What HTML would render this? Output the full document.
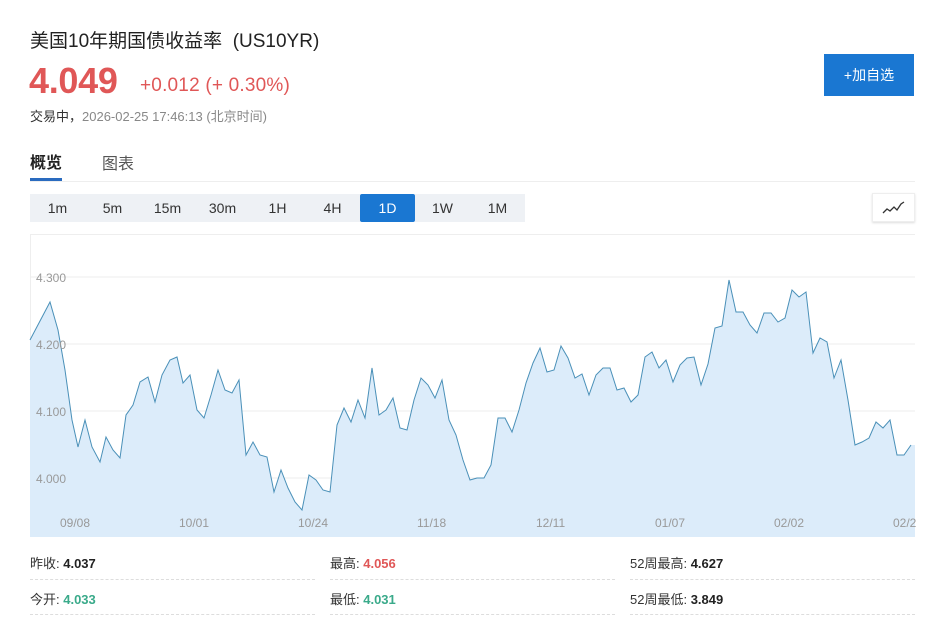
<!DOCTYPE html>
<html><head><meta charset="utf-8"><style>
body{margin:0;width:939px;height:630px;background:#fff;font-family:"Liberation Sans","Noto Sans CJK SC",sans-serif;position:relative;overflow:hidden}
.a{position:absolute;white-space:nowrap}
.tf{position:absolute;top:194px;height:28px;line-height:28px;text-align:center;font-size:14px;color:#333;background:#eef1f5}
.lbl{font-size:13px;color:#333}
.lbl b{color:#222}
.dash{position:absolute;height:0;border-top:1px dashed #ddd}
</style></head><body>
<div class="a" style="left:30px;top:26px;font-size:19px;color:#222">美国10年期国债收益率&nbsp;&nbsp;(US10YR)</div>
<div class="a" style="left:29px;top:60px;font-size:36px;font-weight:bold;color:#e05757;letter-spacing:-0.3px">4.049</div>
<div class="a" style="left:140px;top:75px;font-size:19px;color:#e05757;letter-spacing:0.2px">+0.012 (+ 0.30%)</div>
<div class="a" style="left:30px;top:106px;font-size:13px;color:#333">交易中，<span style="color:#888">2026-02-25 17:46:13 (北京时间)</span></div>
<div class="a" style="left:824px;top:54px;width:90px;height:42px;background:#1a77d2;color:#fff;font-size:14px;line-height:42px;text-align:center">+加自选</div>
<div class="a" style="left:30px;top:149px;font-size:16px;font-weight:bold;color:#222">概览</div>
<div class="a" style="left:102px;top:150px;font-size:16px;color:#555">图表</div>
<div class="a" style="left:30px;top:178px;width:32px;height:3px;background:#2a6bbf"></div>
<div class="a" style="left:30px;top:181px;width:885px;height:1px;background:#eee"></div>
<div class="tf" style="left:30px;width:55px">1m</div>
<div class="tf" style="left:85px;width:55px">5m</div>
<div class="tf" style="left:140px;width:55px">15m</div>
<div class="tf" style="left:195px;width:55px">30m</div>
<div class="tf" style="left:250px;width:55px">1H</div>
<div class="tf" style="left:305px;width:55px">4H</div>
<div class="tf" style="left:360px;width:55px;background:#1a77d2;color:#fff;border-radius:2px">1D</div>
<div class="tf" style="left:415px;width:55px">1W</div>
<div class="tf" style="left:470px;width:55px">1M</div>
<div class="a" style="left:872px;top:193px;width:41px;height:27px;border:1px solid #eee;box-shadow:0 1px 2px #ddd">
<svg width="41" height="27"><path d="M10 19 L14 15 L17 17 L21 13 L24 16 L28 10 L31 8" fill="none" stroke="#333" stroke-width="1.3"/></svg></div>
<div class="a" style="left:30px;top:234px;width:885px;height:1px;background:#eee"></div>
<svg class="a" style="left:0;top:0" width="939" height="630">
<g stroke="#ececec" stroke-width="1"><line x1="30" y1="277" x2="915" y2="277"/><line x1="30" y1="344" x2="915" y2="344"/><line x1="30" y1="411" x2="915" y2="411"/><line x1="30" y1="478" x2="915" y2="478"/></g>
<line x1="30.5" y1="235" x2="30.5" y2="537" stroke="#eee"/>
<path d="M30 340 L50 302 L58 330 L65 370 L72 420 L78 447 L85 420 L92 447 L100 462 L106 437 L113 450 L120 458 L126 415 L133 405 L140 382 L148 377 L155 402 L162 375 L170 360 L177 357 L183 383 L190 375 L197 410 L204 418 L211 395 L218 370 L225 390 L232 393 L239 380 L246 455 L253 442 L260 455 L267 457 L274 492 L281 470 L288 488 L295 502 L302 510 L309 475 L316 480 L323 490 L330 492 L337 425 L344 408 L351 422 L358 400 L365 418 L372 368 L379 415 L386 410 L393 398 L400 428 L407 430 L414 400 L421 378 L428 385 L435 398 L442 380 L449 420 L456 435 L463 460 L470 480 L477 478 L484 478 L491 465 L498 418 L505 418 L512 432 L519 410 L526 383 L533 363 L540 348 L547 372 L554 370 L561 346 L568 358 L575 378 L582 374 L589 395 L596 375 L603 368 L610 368 L617 390 L624 388 L631 402 L638 395 L645 357 L652 352 L659 368 L666 360 L673 382 L680 365 L687 358 L694 357 L701 385 L708 364 L715 328 L722 326 L729 280 L736 312 L743 312 L750 325 L757 333 L764 313 L771 313 L778 322 L785 318 L792 290 L799 297 L806 292 L813 353 L820 338 L827 342 L834 378 L841 360 L848 400 L855 445 L862 442 L869 438 L876 422 L883 428 L890 420 L897 455 L904 455 L911 445 L915 445 L915 537 L30 537 Z" fill="#dcecfa"/>
<path d="M30 340 L50 302 L58 330 L65 370 L72 420 L78 447 L85 420 L92 447 L100 462 L106 437 L113 450 L120 458 L126 415 L133 405 L140 382 L148 377 L155 402 L162 375 L170 360 L177 357 L183 383 L190 375 L197 410 L204 418 L211 395 L218 370 L225 390 L232 393 L239 380 L246 455 L253 442 L260 455 L267 457 L274 492 L281 470 L288 488 L295 502 L302 510 L309 475 L316 480 L323 490 L330 492 L337 425 L344 408 L351 422 L358 400 L365 418 L372 368 L379 415 L386 410 L393 398 L400 428 L407 430 L414 400 L421 378 L428 385 L435 398 L442 380 L449 420 L456 435 L463 460 L470 480 L477 478 L484 478 L491 465 L498 418 L505 418 L512 432 L519 410 L526 383 L533 363 L540 348 L547 372 L554 370 L561 346 L568 358 L575 378 L582 374 L589 395 L596 375 L603 368 L610 368 L617 390 L624 388 L631 402 L638 395 L645 357 L652 352 L659 368 L666 360 L673 382 L680 365 L687 358 L694 357 L701 385 L708 364 L715 328 L722 326 L729 280 L736 312 L743 312 L750 325 L757 333 L764 313 L771 313 L778 322 L785 318 L792 290 L799 297 L806 292 L813 353 L820 338 L827 342 L834 378 L841 360 L848 400 L855 445 L862 442 L869 438 L876 422 L883 428 L890 420 L897 455 L904 455 L911 445" fill="none" stroke="#4a90b8" stroke-width="1"/>
<g font-family="Liberation Sans,sans-serif" font-size="12" fill="#999"><text x="36" y="282">4.300</text><text x="36" y="349">4.200</text><text x="36" y="416">4.100</text><text x="36" y="483">4.000</text>
<text x="60" y="527">09/08</text><text x="179" y="527">10/01</text><text x="298" y="527">10/24</text><text x="417" y="527">11/18</text><text x="536" y="527">12/11</text><text x="655" y="527">01/07</text><text x="774" y="527">02/02</text><text x="893" y="527">02/2</text></g>
</svg>
<div class="a lbl" style="left:30px;top:553px">昨收: <b>4.037</b></div>
<div class="a lbl" style="left:330px;top:553px">最高: <b style="color:#e05757">4.056</b></div>
<div class="a lbl" style="left:630px;top:553px">52周最高: <b>4.627</b></div>
<div class="a lbl" style="left:30px;top:589px">今开: <b style="color:#3aaa8a">4.033</b></div>
<div class="a lbl" style="left:330px;top:589px">最低: <b style="color:#3aaa8a">4.031</b></div>
<div class="a lbl" style="left:630px;top:589px">52周最低: <b>3.849</b></div>
<div class="dash" style="left:30px;width:285px;top:579px"></div><div class="dash" style="left:330px;width:285px;top:579px"></div><div class="dash" style="left:630px;width:285px;top:579px"></div>
<div class="dash" style="left:30px;width:285px;top:614px"></div><div class="dash" style="left:330px;width:285px;top:614px"></div><div class="dash" style="left:630px;width:285px;top:614px"></div>
</body></html>
